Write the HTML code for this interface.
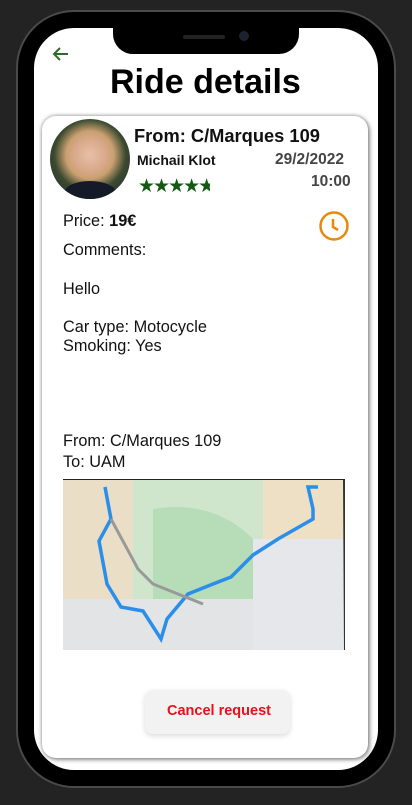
<!DOCTYPE html>
<html><head><style>
*{margin:0;padding:0;box-sizing:border-box}
body{width:412px;height:805px;background:#232323;position:relative;overflow:hidden;font-family:"Liberation Sans",sans-serif}
.phone{position:absolute;left:16px;top:10px;width:380px;height:778px;border-radius:58px;background:#000;border:2px solid #4a4a4c}
.screen{position:absolute;left:34px;top:28px;width:344px;height:742px;border-radius:40px;background:#fff;overflow:hidden}
.notch{position:absolute;left:113px;top:26px;width:186px;height:28px;background:#000;border-radius:0 0 20px 20px}
.t{position:absolute;white-space:nowrap;color:#111}
.card{position:absolute;left:42px;top:116px;width:326px;height:642px;background:#fff;border-radius:14px;box-shadow:0 0 4px rgba(0,0,0,.45),2px 2px 5px rgba(0,0,0,.3)}
</style></head><body>
<div class="phone"></div>
<div class="screen"></div>
<div class="notch"><div style="position:absolute;left:70px;top:9px;width:42px;height:4px;border-radius:2px;background:#222"></div><div style="position:absolute;left:126px;top:5px;width:10px;height:10px;border-radius:50%;background:#1c2230"></div></div>
<svg style="position:absolute;left:52px;top:46px" width="18" height="16" viewBox="0 0 18 16"><path d="M16 8H2M8 2L2 8l6 6" stroke="#2e6b2a" stroke-width="2" fill="none"/></svg>
<div class="t" style="left:110px;top:63px;font-size:34px;font-weight:bold;color:#000">Ride details</div>
<div class="card"></div>
<div style="position:absolute;left:50px;top:119px;width:80px;height:80px;border-radius:50%;overflow:hidden;background:radial-gradient(circle at 50% 45%,#e8c0a8 0,#d8a888 28%,#caa070 40%,#3b4a30 60%,#1d2230 100%)"><div style="position:absolute;left:14px;top:62px;width:52px;height:24px;background:#151a28;border-radius:50% 50% 0 0"></div></div>
<div class="t" style="left:134px;top:125px;font-size:18.3px;font-weight:bold">From: C/Marques 109</div>
<div class="t" style="left:137px;top:152px;font-size:14px;font-weight:bold">Michail Klot</div>
<div class="t" style="left:275px;top:151px;font-size:15.5px;font-weight:bold;color:#444">29/2/2022</div>
<div class="t" style="left:311px;top:173px;font-size:15.5px;font-weight:bold;color:#444">10:00</div>
<div class="t" style="left:138px;top:175px;font-size:19px;color:#145a14;letter-spacing:-2px;width:72px;overflow:hidden">★★★★★</div>
<svg style="position:absolute;left:318px;top:210px" width="32" height="32" viewBox="0 0 32 32"><circle cx="16" cy="16" r="13.5" stroke="#e8890c" stroke-width="2.5" fill="none"/><path d="M15 9v8l5 3" stroke="#e8890c" stroke-width="2.5" fill="none"/></svg>
<div class="t" style="left:63px;top:212px;font-size:16.3px">Price: <b>19€</b></div>
<div class="t" style="left:63px;top:241px;font-size:16.3px">Comments:</div>
<div class="t" style="left:63px;top:280px;font-size:16.3px">Hello</div>
<div class="t" style="left:63px;top:318px;font-size:16.3px;line-height:19px">Car type: Motocycle<br>Smoking: Yes</div>
<div class="t" style="left:63px;top:431px;font-size:16.3px;line-height:21px">From: C/Marques 109<br>To: UAM</div>
<svg style="position:absolute;left:63px;top:479px" width="282" height="171" viewBox="0 0 282 171">
<rect width="282" height="171" fill="#cfe5cc"/>
<path d="M0 0h70v120H0z" fill="#eadfc6"/><path d="M0 120h282v51H0z" fill="#e2e4e6"/>
<path d="M190 60h92v111H190z" fill="#e6e7ea"/><path d="M200 0h82v60h-82z" fill="#eee0c4"/>
<path d="M90 30q60-10 100 30v60H90z" fill="#b7dcb8"/>
<path d="M280 0H282V171h-1z" fill="#333"/>
<rect x="0" y="0" width="282" height="1" fill="#222"/>
<path d="M42 8L48 40L36 62L44 105L58 128L80 132L98 160L104 140L125 115L150 105L168 98L190 76L215 60L250 40L250 30L245 8H255" stroke="#2b8ee8" stroke-width="3.5" fill="none"/>
<path d="M48 40L75 90L90 105L140 125" stroke="#999" stroke-width="3" fill="none"/>
</svg>
<div style="position:absolute;left:145px;top:690px;width:145px;height:44px;border-radius:8px;background:#f2f2f2;box-shadow:0 2px 6px rgba(0,0,0,.15)"></div>
<div class="t" style="left:167px;top:703px;font-size:14.5px;font-weight:bold;color:#e8101a">Cancel request</div>
</body></html>
